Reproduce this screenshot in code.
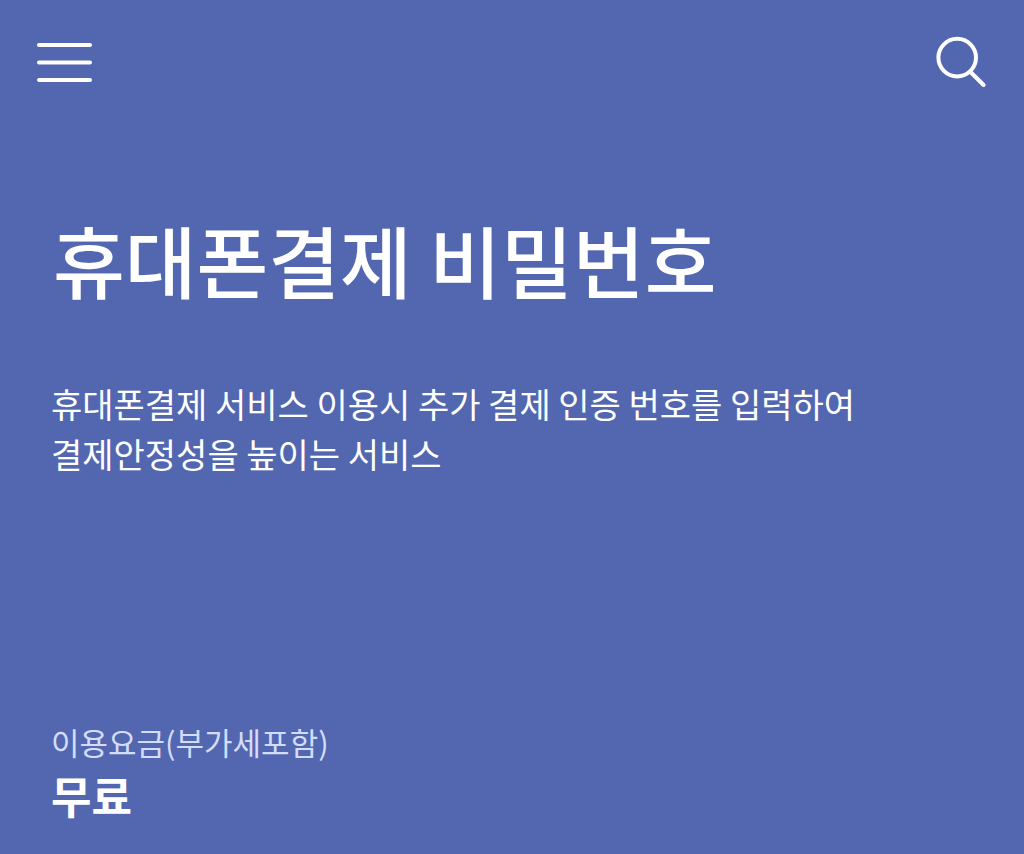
<header class="bar">
  <button type="button" aria-label="메뉴">
    <svg width="56" height="40" viewBox="0 0 56 40"><path d="M2 3H53M2 20.500H53M2 38H53" /></svg>
  </button>
  <button type="button" aria-label="검색">
    <svg width="51" height="52" viewBox="0 0 51 52"><circle cx="21.200" cy="21.600" r="18.800" /><path d="M34.500 36L47.600 49" /></svg>
  </button>
</header>

<main>
  <h1>휴대폰결제 비밀번호</h1>
  <p class="summary">휴대폰결제 서비스 이용시 추가 결제 인증 번호를 입력하여<br />결제안정성을 높이는 서비스</p>
  <dl>
    <dt>이용요금(부가세포함)</dt>
    <dd>무료</dd>
  </dl>
</main>

<style>
  :global(body) {
    margin: 0;
    background: #5267b0;
    color: #fff;
    font-family: "Noto Sans CJK KR", sans-serif;
  }
  .bar {
    display: flex;
    justify-content: space-between;
    align-items: center;
    padding: 36px 37px;
  }
  button {
    display: flex;
    padding: 0;
    border: 0;
    background: none;
    color: inherit;
  }
  svg {
    fill: none;
    stroke: currentColor;
    stroke-width: 4;
    stroke-linecap: round;
  }
  main {
    padding: 75px 51px 24px;
  }
  h1 {
    margin: 0 2px;
    font-size: 78px;
    line-height: 120px;
    font-weight: 500;
  }
  .summary {
    margin: 60px 0 0;
    font-size: 34px;
    line-height: 50px;
  }
  dl {
    margin: 238px 0 0;
  }
  dt {
    color: #d3dcfa;
    font-size: 31px;
    line-height: 50px;
  }
  dd {
    margin: 0;
    font-size: 44px;
    line-height: 56px;
    font-weight: 700;
  }
</style>
